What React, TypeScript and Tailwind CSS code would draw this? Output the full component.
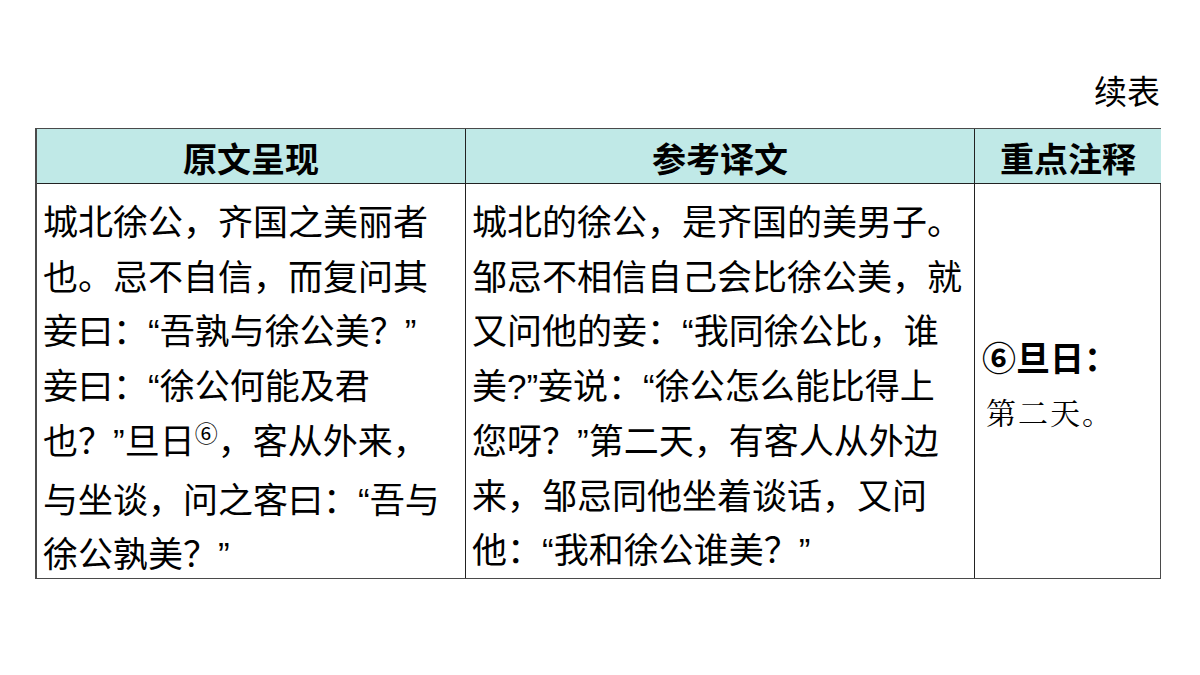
import React from "react"

const font = { fontFamily: '"Liberation Sans", "Noto Sans CJK SC", sans-serif' }

const original = [
  "城北徐公，齐国之美丽者",
  "也。忌不自信，而复问其",
  "妾曰：“吾孰与徐公美？”",
  "妾曰：“徐公何能及君",
  "SUP",
  "与坐谈，问之客曰：“吾与",
  "徐公孰美？”",
]

const translation = [
  "城北的徐公，是齐国的美男子。",
  "邹忌不相信自己会比徐公美，就",
  "又问他的妾：“我同徐公比，谁",
  "美?”妾说：“徐公怎么能比得上",
  "您呀？”第二天，有客人从外边",
  "来，邹忌同他坐着谈话，又问",
  "他：“我和徐公谁美？”",
]

function Lines({ lines }: { lines: string[] }) {
  return (
    <div className="pt-[12px] pl-[6px] text-[35px] leading-[54.7px] text-black">
      {lines.map((line, i) =>
        line === "SUP" ? (
          <div key={i} className="whitespace-nowrap">
            也？”旦日<span className="relative -top-[12px] text-[23px]">⑥</span>，客从外来，
          </div>
        ) : (
          <div key={i} className="whitespace-nowrap">
            {line}
          </div>
        )
      )}
    </div>
  )
}

export default function App() {
  return (
    <div className="min-h-[675px] w-[1200px] bg-white" style={font}>
      <div className="ml-[35px] w-[1126px] pt-[73px]">
        <div className="h-[40px] pr-[1px] text-right text-[33px] leading-[40px] text-black">续表</div>
        <div className="mt-[15px] grid grid-cols-[429px_509px_186px] border border-l-2 border-[#4a4a4a]">
          <div className="flex h-[55px] items-center justify-center border-r border-b border-[#222] bg-[#c0e9e7] pt-[8px] text-[34px] font-bold text-black">
            原文呈现
          </div>
          <div className="flex h-[55px] items-center justify-center border-r border-b border-[#222] bg-[#c0e9e7] pt-[8px] text-[34px] font-bold text-black">
            参考译文
          </div>
          <div className="flex h-[55px] items-center justify-center border-b border-[#222] bg-[#c0e9e7] pt-[8px] text-[34px] font-bold text-black">
            重点注释
          </div>
          <div className="h-[394px] border-r border-[#222]">
            <Lines lines={original} />
          </div>
          <div className="h-[394px] border-r border-[#222]">
            <Lines lines={translation} />
          </div>
          <div className="h-[394px] pl-[7px] pt-[151px]">
            <div className="whitespace-nowrap text-[34px] font-bold leading-[48px] text-black">⑥旦日：</div>
            <div
              className="mt-[8px] whitespace-nowrap pl-[4px] text-[30px] leading-[40px] tracking-[2px] text-black"
              style={{ fontFamily: '"Noto Serif CJK SC", "Noto Sans CJK SC", serif' }}
            >
              第二天。
            </div>
          </div>
        </div>
      </div>
    </div>
  )
}
